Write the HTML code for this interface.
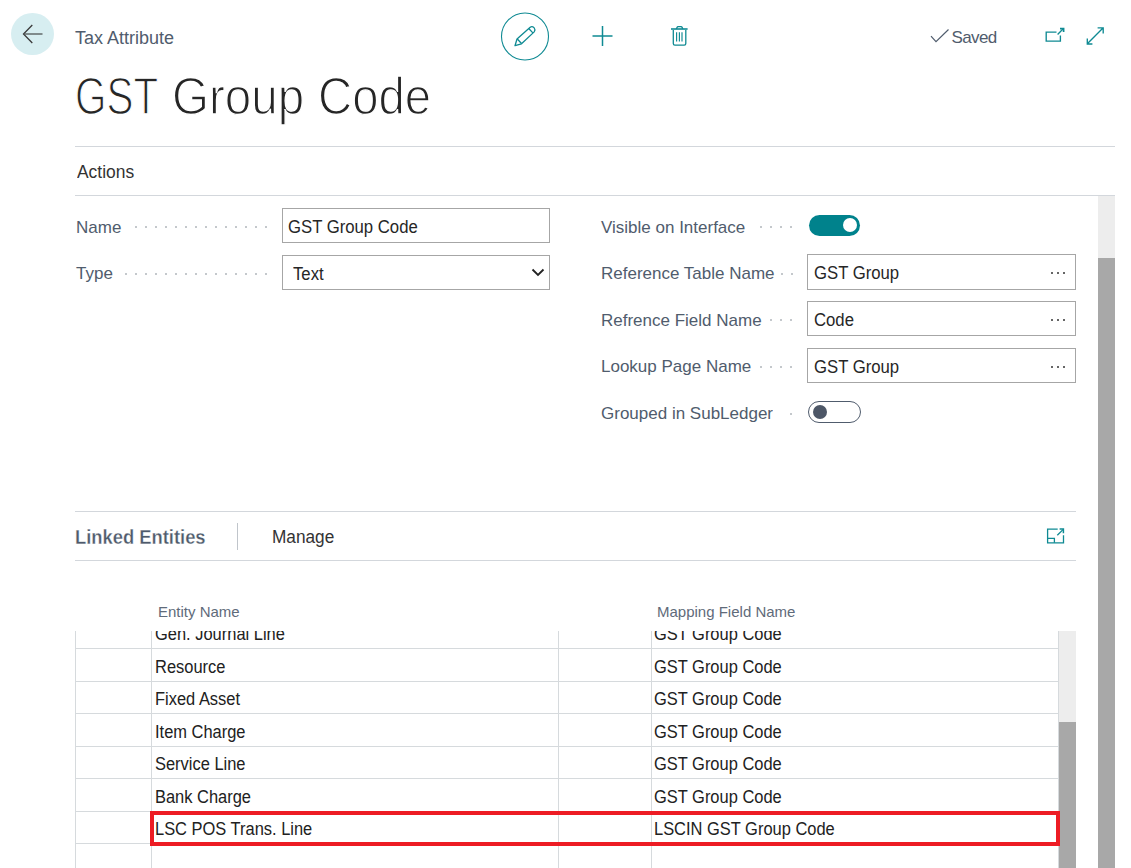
<!DOCTYPE html>
<html><head><meta charset="utf-8">
<style>
*{margin:0;padding:0;box-sizing:border-box}
html,body{width:1131px;height:868px;overflow:hidden;background:#fff}
body{position:relative;font-family:"Liberation Sans",sans-serif;color:#212121}
.a{position:absolute;white-space:nowrap}
.hd{position:absolute;white-space:nowrap;top:69.5px;font-size:52px;line-height:52px;color:#262626;transform-origin:0 0;-webkit-text-stroke:1.4px #fff}
.t17{font-size:17px;line-height:17px}
.inp{font-size:17.5px;line-height:17.5px;color:#262626;transform:scaleX(0.955);transform-origin:0 0}
.lbl{color:#505c6d;font-size:17px;line-height:17px}
.hl{position:absolute;height:1px;background:#d3d7dc}
.dots{position:absolute;height:2px;background-image:radial-gradient(circle at 1px 1px,#c4c8cc 0.9px,transparent 1.1px);background-size:10px 2px;background-repeat:repeat-x}
.box{position:absolute;border:1px solid #a6a6a6;background:#fff}
.ell{position:absolute;width:15px;height:3px;margin-top:0px}
.ell i{position:absolute;top:0;width:2px;height:2px;background:#333;border-radius:1px}
.row{position:absolute;left:75px;width:983px;height:1px;background:#d6dadd}
.vl{position:absolute;width:1px;background:#d6dadd}
.cell{position:absolute;font-size:17.5px;line-height:17.5px;transform:scaleX(0.94);transform-origin:0 0;color:#212121;white-space:nowrap}
</style></head><body>

<!-- back button -->
<div class="a" style="left:11px;top:12.5px;width:43px;height:42.5px;border-radius:50%;background:#d7eef1"></div>
<svg class="a" style="left:0;top:0" width="80" height="80" viewBox="0 0 80 80">
<path d="M32.3 25 L23.5 34 L32.3 43" fill="none" stroke="#3a3a3a" stroke-width="1.3"/><path d="M24 34 H42.5" fill="none" stroke="#505656" stroke-width="1.3"/>
</svg>

<div class="a" style="left:75px;top:29px;font-size:18px;line-height:18px;color:#505c6d">Tax Attribute</div>

<!-- toolbar icons -->
<svg class="a" style="left:490px;top:0" width="220" height="70" viewBox="490 0 220 70">
<circle cx="525" cy="36.5" r="23.5" fill="none" stroke="#0f8a93" stroke-width="1.1"/>
<g fill="none" stroke="#0f8a93" stroke-width="1.3" stroke-linejoin="round">
<path d="M515 45.7 L517 39 L530.2 27.2 Q532.2 25.9 534.2 27.9 Q535.7 29.9 534.2 31.9 L521.5 43.8 Z"/>
<path d="M517.3 39 L521.5 43.5 M528.7 28.5 L532.9 32.9"/>
</g>
<path d="M592.5 36 H612.5 M602.5 26 V46" stroke="#0f8a93" stroke-width="1.5" fill="none"/>
<g fill="none" stroke="#0f8a93" stroke-width="1.3">
<path d="M671 29 H687.6" stroke-width="1.6"/>
<path d="M676.4 29 L677 27.4 Q677.3 26.6 678.2 26.6 H681 Q681.9 26.6 682.2 27.4 L682.8 29"/>
<path d="M673.3 30 V43.6 Q673.3 45.2 674.9 45.2 H684.2 Q685.8 45.2 685.8 43.6 V30"/>
<path d="M676.6 32.3 V41.6 M679.4 32.3 V41.6 M682 32.3 V41.6" stroke-width="1.15"/>
</g>
</svg>

<!-- saved -->
<svg class="a" style="left:925px;top:20px" width="30" height="30" viewBox="925 20 30 30">
<path d="M931 36.2 L936 41.7 L948.5 29.5" fill="none" stroke="#505c6d" stroke-width="1.2"/>
</svg>
<div class="a" style="left:951.5px;top:28.9px;font-size:17px;line-height:17px;letter-spacing:-0.6px;color:#505c6d">Saved</div>
<svg class="a" style="left:1035px;top:18px" width="80" height="35" viewBox="1035 18 80 35">
<g fill="none" stroke="#0f8a93" stroke-width="1.35">
<path d="M1056.5 32.1 H1046.2 V41.1 H1060.4 V35.6"/>
<path d="M1057.6 34.4 L1063.2 28.8"/>
<path d="M1060 28.6 H1063.6 V32" stroke-width="1.7"/>
<path d="M1087.3 43.8 L1103 28 M1087.3 38.4 V44 H1092.4 M1097.6 27.9 H1103.2 V33.4"/>
</g>
</svg>

<!-- heading -->
<div class="hd" style="left:75.4px;transform:scaleX(0.777)">GST</div>
<div class="hd" style="left:172.3px;transform:scaleX(0.915)">Group</div>
<div class="hd" style="left:317.8px;transform:scaleX(0.909)">Code</div>

<div class="hl" style="left:75px;top:146px;width:1040px"></div>
<div class="a" style="left:76.6px;top:164px;font-size:17.5px;line-height:17.5px;color:#333;transform:scaleX(0.995);transform-origin:0 0">Actions</div>
<div class="hl" style="left:75px;top:195px;width:1040px"></div>

<!-- outer scrollbar -->
<div class="a" style="left:1098px;top:196px;width:17px;height:62px;background:#ededed"></div>
<div class="a" style="left:1098px;top:258px;width:17px;height:610px;background:#a8a8a8"></div>

<!-- left fields -->
<div class="a lbl" style="left:76px;top:218.6px">Name</div>
<div class="dots" style="left:134.5px;top:226px;width:133px"></div>
<div class="box" style="left:282px;top:208px;width:268px;height:35px"></div>
<div class="a inp" style="left:287.8px;top:218.7px">GST Group Code</div>

<div class="a lbl" style="left:76px;top:265.2px">Type</div>
<div class="dots" style="left:124.5px;top:273px;width:143px"></div>
<div class="box" style="left:282px;top:255px;width:268px;height:35px"></div>
<div class="a inp" style="left:292.5px;top:266.2px">Text</div>
<svg class="a" style="left:530px;top:266px" width="16" height="12" viewBox="530 266 16 12">
<path d="M532.5 269.5 L538 275 L543.5 269.5" fill="none" stroke="#222" stroke-width="1.8"/>
</svg>

<!-- right fields -->
<div class="a lbl" style="left:601px;top:218.5px">Visible on Interface</div>
<div class="dots" style="left:760px;top:226px;width:33px"></div>
<div class="a" style="left:809px;top:215px;width:51px;height:21px;border-radius:11px;background:#00828c"></div>
<div class="a" style="left:843px;top:217.8px;width:14px;height:14px;border-radius:50%;background:#fff"></div>

<div class="a lbl" style="left:601px;top:264.5px">Reference Table Name</div>
<div class="dots" style="left:780.5px;top:272.5px;width:13px"></div>
<div class="box" style="left:807px;top:254px;width:269px;height:35.6px"></div>
<div class="a inp" style="left:813.5px;top:264.7px">GST Group</div>
<div class="ell" style="left:1050.5px;top:271.5px"><i style="left:0"></i><i style="left:6.3px"></i><i style="left:12.6px"></i></div>

<div class="a lbl" style="left:601px;top:311.6px">Refrence Field Name</div>
<div class="dots" style="left:770px;top:319px;width:23px"></div>
<div class="box" style="left:807px;top:301px;width:269px;height:35.4px"></div>
<div class="a inp" style="left:813.5px;top:311.7px">Code</div>
<div class="ell" style="left:1050.5px;top:318.5px"><i style="left:0"></i><i style="left:6.3px"></i><i style="left:12.6px"></i></div>

<div class="a lbl" style="left:601px;top:358.2px">Lookup Page Name</div>
<div class="dots" style="left:760px;top:366px;width:33px"></div>
<div class="box" style="left:807px;top:348px;width:269px;height:35.4px"></div>
<div class="a inp" style="left:813.5px;top:358.7px">GST Group</div>
<div class="ell" style="left:1050.5px;top:365.5px"><i style="left:0"></i><i style="left:6.3px"></i><i style="left:12.6px"></i></div>

<div class="a lbl" style="left:601px;top:405.3px;height:18px;overflow:hidden">Grouped in SubLedger</div>
<div class="dots" style="left:790px;top:412.5px;width:3px"></div>
<div class="a" style="left:808px;top:401px;width:53px;height:22px;border-radius:11px;border:1.2px solid #505c6d"></div>
<div class="a" style="left:813px;top:405px;width:14px;height:14px;border-radius:50%;background:#4d5767"></div>

<!-- linked entities -->
<div class="hl" style="left:75px;top:511px;width:1001px"></div>
<div class="a" style="left:75px;top:527.2px;font-size:20px;line-height:20px;font-weight:bold;color:#4e5a6b;transform:scaleX(0.918);transform-origin:0 0;-webkit-text-stroke:0.3px #fff">Linked Entities</div>
<div class="a" style="left:237px;top:522.5px;width:1px;height:27px;background:#c0c5cb"></div>
<div class="a" style="left:272px;top:529.4px;font-size:17.5px;line-height:17.5px;color:#333;transform:scaleX(0.985);transform-origin:0 0">Manage</div>
<svg class="a" style="left:1040px;top:520px" width="30" height="30" viewBox="1040 520 30 30">
<g fill="none" stroke="#0f8a93" stroke-width="1.3">
<path d="M1057.7 529.1 H1047.6 V542.8 H1063.5 V535.2"/>
<path d="M1047.6 538.4 H1054.4 V542.8"/>
<path d="M1057.3 535.3 L1063 529.6"/>
<path d="M1059.6 529 H1063.4 V533.3" stroke-width="1.5"/>
</g>
</svg>
<div class="hl" style="left:75px;top:560px;width:1001px"></div>

<div class="a" style="left:158px;top:603.5px;font-size:15px;line-height:15px;color:#5f6b7a">Entity Name</div>
<div class="a" style="left:657px;top:603.5px;font-size:15px;line-height:15px;color:#5f6b7a">Mapping Field Name</div>

<!-- table body -->
<div class="a" style="left:0;top:631px;width:1131px;height:237px;overflow:hidden">
  <div style="position:absolute;left:0;top:-631px;width:1131px;height:1000px">
    <div class="vl" style="left:75px;top:616px;height:300px"></div>
    <div class="vl" style="left:151px;top:616px;height:300px"></div>
    <div class="vl" style="left:558px;top:616px;height:300px"></div>
    <div class="vl" style="left:651px;top:616px;height:300px"></div>
    <div class="row" style="top:648px"></div>
    <div class="row" style="top:681px"></div>
    <div class="row" style="top:713px"></div>
    <div class="row" style="top:746px"></div>
    <div class="row" style="top:778px"></div>
    <div class="row" style="top:811px"></div>
    <div class="row" style="top:843px"></div>

    <div class="cell" style="left:154.5px;top:626.1px">Gen. Journal Line</div>
    <div class="cell" style="left:653.5px;top:626.1px">GST Group Code</div>
    <div class="cell" style="left:154.5px;top:658.6px">Resource</div>
    <div class="cell" style="left:653.5px;top:658.6px">GST Group Code</div>
    <div class="cell" style="left:154.5px;top:691.1px">Fixed Asset</div>
    <div class="cell" style="left:653.5px;top:691.1px">GST Group Code</div>
    <div class="cell" style="left:154.5px;top:723.6px">Item Charge</div>
    <div class="cell" style="left:653.5px;top:723.6px">GST Group Code</div>
    <div class="cell" style="left:154.5px;top:756.1px">Service Line</div>
    <div class="cell" style="left:653.5px;top:756.1px">GST Group Code</div>
    <div class="cell" style="left:154.5px;top:788.6px">Bank Charge</div>
    <div class="cell" style="left:653.5px;top:788.6px">GST Group Code</div>
    <div class="cell" style="left:154.5px;top:821.1px">LSC POS Trans. Line</div>
    <div class="cell" style="left:653.5px;top:821.1px">LSCIN GST Group Code</div>

    <!-- inner scrollbar -->
    <div class="a" style="left:1058px;top:631px;width:18px;height:91px;background:#ededed;border-left:1px solid #d6dadd"></div>
    <div class="a" style="left:1058px;top:722px;width:18px;height:200px;background:#a8a8a8;border-left:1px solid #d6dadd"></div>
    <div class="a" style="left:150px;top:811px;width:909.5px;height:34.8px;border:4px solid #ed1c24"></div>
  </div>
</div>

</body></html>
